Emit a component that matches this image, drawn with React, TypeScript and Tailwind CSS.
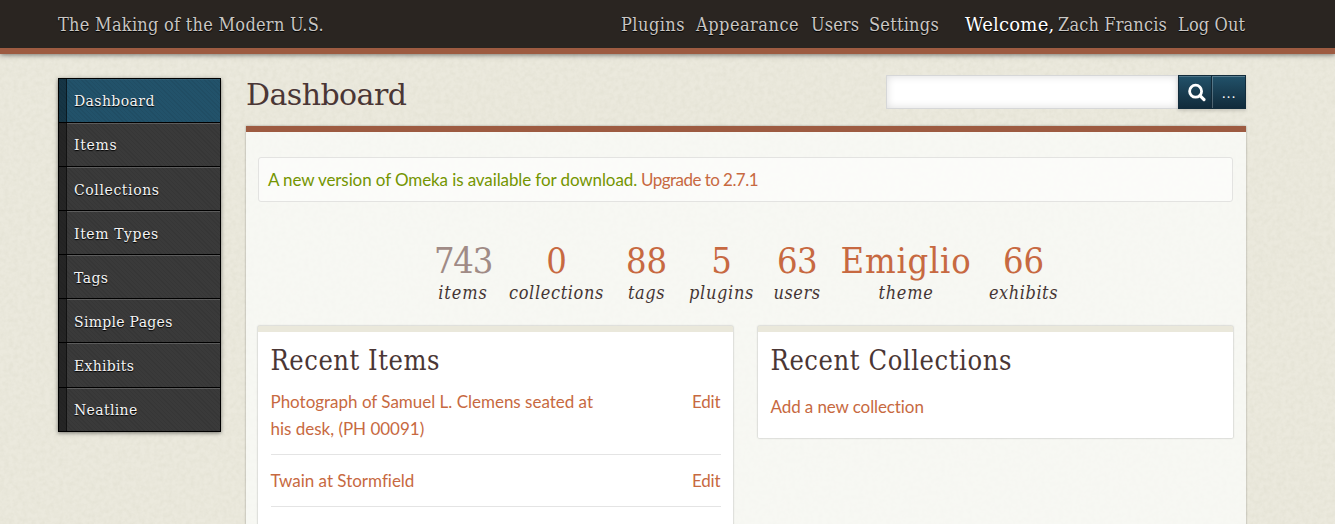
const nav = [
  { label: "Plugins", box: "w-[75px] tracking-[0.46px]" },
  { label: "Appearance", box: "w-[115px] tracking-[0.49px]" },
  { label: "Users", box: "w-[58px] tracking-[0.1px]" },
  { label: "Settings", box: "w-[96px] tracking-[0.25px]" },
];

const sections = [
  { label: "Dashboard", box: "h-[43px] tracking-[0.4px]" },
  { label: "Items", box: "h-[43px] tracking-[0.7px]" },
  { label: "Collections", box: "h-[43px] pt-px tracking-[0.6px]" },
  { label: "Item Types", box: "h-[43px] pt-px tracking-[0.6px]" },
  { label: "Tags", box: "h-[43px] pt-px tracking-[0.4px]" },
  { label: "Simple Pages", box: "h-[43px] pt-px tracking-[0.3px]" },
  { label: "Exhibits", box: "h-[44px] pt-px tracking-[0.3px]" },
  { label: "Neatline", box: "h-[43px] tracking-[0.35px]" },
];

const stats = [
  { value: "743", label: "items", box: "w-[76px]", value_: "tracking-[-1.2px] text-[#a08b86]", label_: "tracking-[0.9px]" },
  { value: "0", label: "collections", box: "w-[111px]", value_: "text-[#c76941]", label_: "tracking-[0.64px]" },
  { value: "88", label: "tags", box: "w-[69px]", value_: "text-[#c76941]", label_: "tracking-[0.54px]" },
  { value: "5", label: "plugins", box: "w-[81px]", value_: "text-[#c76941]", label_: "tracking-[0.68px]" },
  { value: "63", label: "users", box: "w-[70px]", value_: "tracking-[-0.6px] text-[#c76941]", label_: "tracking-[0.53px]" },
  { value: "Emiglio", label: "theme", box: "w-[148px]", value_: "tracking-[0.75px] text-[#c76941]", label_: "tracking-[0.71px]" },
  { value: "66", label: "exhibits", box: "w-[87px]", value_: "text-[#c76941]", label_: "tracking-[0.54px]" },
];

function PaperTexture() {
  return (
    <svg className="absolute inset-0 h-full w-full" aria-hidden="true">
      <filter id="paper" x="0" y="0" width="100%" height="100%">
        <feTurbulence type="fractalNoise" baseFrequency="0.22" numOctaves="3" seed="4" />
        <feColorMatrix values="0 0 0 0 0.45  0 0 0 0 0.45  0 0 0 0 0.32  0.2 0 0 0 -0.065" />
      </filter>
      <rect width="100%" height="100%" filter="url(#paper)" />
    </svg>
  );
}

function Header() {
  return (
    <header className="relative flex h-[54px] shrink-0 items-start justify-between border-b-[6px] border-[#9d5b41] bg-[#2a2521] pr-[89px] pl-[58px] font-['DejaVu_Serif_Condensed','DejaVu_Serif',serif] text-[18px] leading-[50px] whitespace-nowrap text-[#c9c6c3] shadow-[0_1px_5px_rgba(0,0,0,0.5)] [text-shadow:0_1px_1px_#000]">
      <a className="tracking-[0.27px]">The Making of the Modern U.S.</a>
      <nav className="flex">
        {nav.map((n) => (
          <a key={n.label} className={n.box}>
            {n.label}
          </a>
        ))}
        <span className="w-[93px] font-['DejaVu_Serif',serif] tracking-[0.2px] text-white">Welcome,</span>
        <a className="w-[120px] tracking-[0.15px]">Zach Francis</a>
        <a className="w-[68px] tracking-[0.15px]">Log Out</a>
      </nav>
    </header>
  );
}

function Sidebar() {
  return (
    <ul className="mt-6 w-[163px] shrink-0 self-start border border-b-0 border-black font-['DejaVu_Serif',serif] text-[14px] leading-[45px] text-[#f4f4f4] shadow-[0_1px_4px_rgba(0,0,0,0.5)] [text-shadow:0_1px_1px_#000]">
      {sections.map((s, i) => (
        <li key={s.label} className={i === 0 ? "flex border-b border-black bg-[#22526a] bg-[repeating-linear-gradient(45deg,rgba(0,0,0,0.06)_0_1px,transparent_1px_3px)]" : "flex border-b border-black bg-[#3a3a3a] bg-[repeating-linear-gradient(45deg,rgba(0,0,0,0.07)_0_1px,transparent_1px_3px)]"}>
          <span className="w-2 shrink-0 border-r border-black/50 bg-black/35" />
          <a className={`${s.box} grow pl-[7px] whitespace-nowrap ${i === 0 ? "shadow-[inset_0_1px_0_rgba(255,255,255,0.08)]" : "shadow-[inset_0_1px_0_rgba(255,255,255,0.18)]"}`}>{s.label}</a>
        </li>
      ))}
    </ul>
  );
}

function Search() {
  return (
    <form className="mt-[21px] flex h-[34px] w-[360px]">
      <input className="w-[292px] border border-r-0 border-[#d6d7d8] bg-white shadow-[inset_0_0_8px_rgba(0,0,0,0.14)] outline-none" />
      <button type="button" className="flex w-[34px] items-center justify-center border border-[#122c3c] bg-linear-to-b from-[#22526a] to-[#112b3b] shadow-[inset_0_1px_0_rgba(255,255,255,0.2),0_2px_3px_rgba(0,0,0,0.15)]">
        <svg width="20" height="20" viewBox="0 0 20 20" fill="none" stroke="white" className="mt-[2px] ml-[3px]">
          <circle cx="8.6" cy="8.2" r="6" strokeWidth="2.8" />
          <path d="M13 12.6 L17 16.6" strokeWidth="3.2" strokeLinecap="round" />
        </svg>
      </button>
      <button type="button" className="w-[34px] border border-l-0 border-[#122c3c] bg-linear-to-b from-[#22526a] to-[#112b3b] pt-[3px] pl-[2px] font-['Lato',sans-serif] text-[13px] tracking-[1.8px] text-white shadow-[inset_1px_1px_0_rgba(255,255,255,0.25),0_2px_3px_rgba(0,0,0,0.15)]">...</button>
    </form>
  );
}

function ItemRow({ title, box }: { title: string; box: string }) {
  return (
    <li className={`flex justify-between border-b border-[#e4e4e4] ${box}`}>
      <a className="w-[340px]">{title}</a>
      <a className="w-[29px] tracking-[-0.2px]">Edit</a>
    </li>
  );
}

export default function App() {
  return (
    <div className="relative flex h-[524px] w-[1335px] flex-col overflow-hidden bg-[#ebe9dd]">
      <PaperTexture />
      <Header />
      <div className="relative flex grow gap-[25px] pl-[58px]">
        <Sidebar />
        <main className="flex w-[1000px] flex-col">
          <div className="flex h-[72px] shrink-0 justify-between">
            <h1 className="mt-[21px] font-['DejaVu_Serif',serif] text-[30px] leading-[40px] tracking-[-0.55px] text-[#4a3635]">Dashboard</h1>
            <Search />
          </div>
          <div className="h-[500px] shrink-0 border-t-[6px] border-[#9d5b41] bg-[#fdfffe]/68 px-3 pt-[25px] font-['Lato',sans-serif] text-[17px] leading-[27px] tracking-[-0.01px] text-[#c76941] shadow-[0_0_2px_rgba(0,0,0,0.35)]">
            <div className="flex h-[45px] w-[975px] items-center rounded-[3px] border border-[#e3e3e1] bg-white/50 pb-px pl-[9px] whitespace-nowrap">
              <span className="w-[373px] tracking-[-0.1px] text-[#749500]">A new version of Omeka is available for download.</span>
              <a className="tracking-[-0.54px]">Upgrade to 2.7.1</a>
            </div>
            <section className="ml-[167px] flex h-[124px] pt-[39px] text-center font-['DejaVu_Serif_Condensed','DejaVu_Serif',serif]">
              {stats.map((s) => (
                <div key={s.label} className={`flex flex-col ${s.box}`}>
                  <span className={`text-[36px] leading-[40px] ${s.value_}`}>{s.value}</span>
                  <span className={`pt-px text-[18px] leading-[22px] text-[#453534] italic ${s.label_}`}>{s.label}</span>
                </div>
              ))}
            </section>
            <div className="flex items-start gap-[25px]">
              <section className="h-[250px] w-[475px] rounded-t-[1px] border-t-[6px] border-[#eae8db] bg-white pt-[11px] pr-[12px] pl-[12.5px] shadow-[0_0_2px_rgba(0,0,0,0.35)]">
                <h2 className="font-['DejaVu_Serif_Condensed','DejaVu_Serif',serif] text-[27px] leading-[36px] tracking-[0.55px] text-[#4a3635]">Recent Items</h2>
                <ul className="mt-[9px]">
                  <ItemRow title="Photograph of Samuel L. Clemens seated at his desk, (PH 00091)" box="h-[67px]" />
                  <ItemRow title="Twain at Stormfield" box="h-[52px] pt-[12px]" />
                </ul>
              </section>
              <section className="h-[112px] w-[475px] rounded-[1px] border-t-[6px] border-[#eae8db] bg-white pt-[11px] pr-[12px] pl-[12.5px] shadow-[0_0_2px_rgba(0,0,0,0.35)]">
                <h2 className="font-['DejaVu_Serif_Condensed','DejaVu_Serif',serif] text-[27px] leading-[36px] tracking-[0.6px] text-[#4a3635]">Recent Collections</h2>
                <p className="mt-[14px]">
                  <a className="tracking-[-0.1px]">Add a new collection</a>
                </p>
              </section>
            </div>
          </div>
        </main>
      </div>
    </div>
  );
}
